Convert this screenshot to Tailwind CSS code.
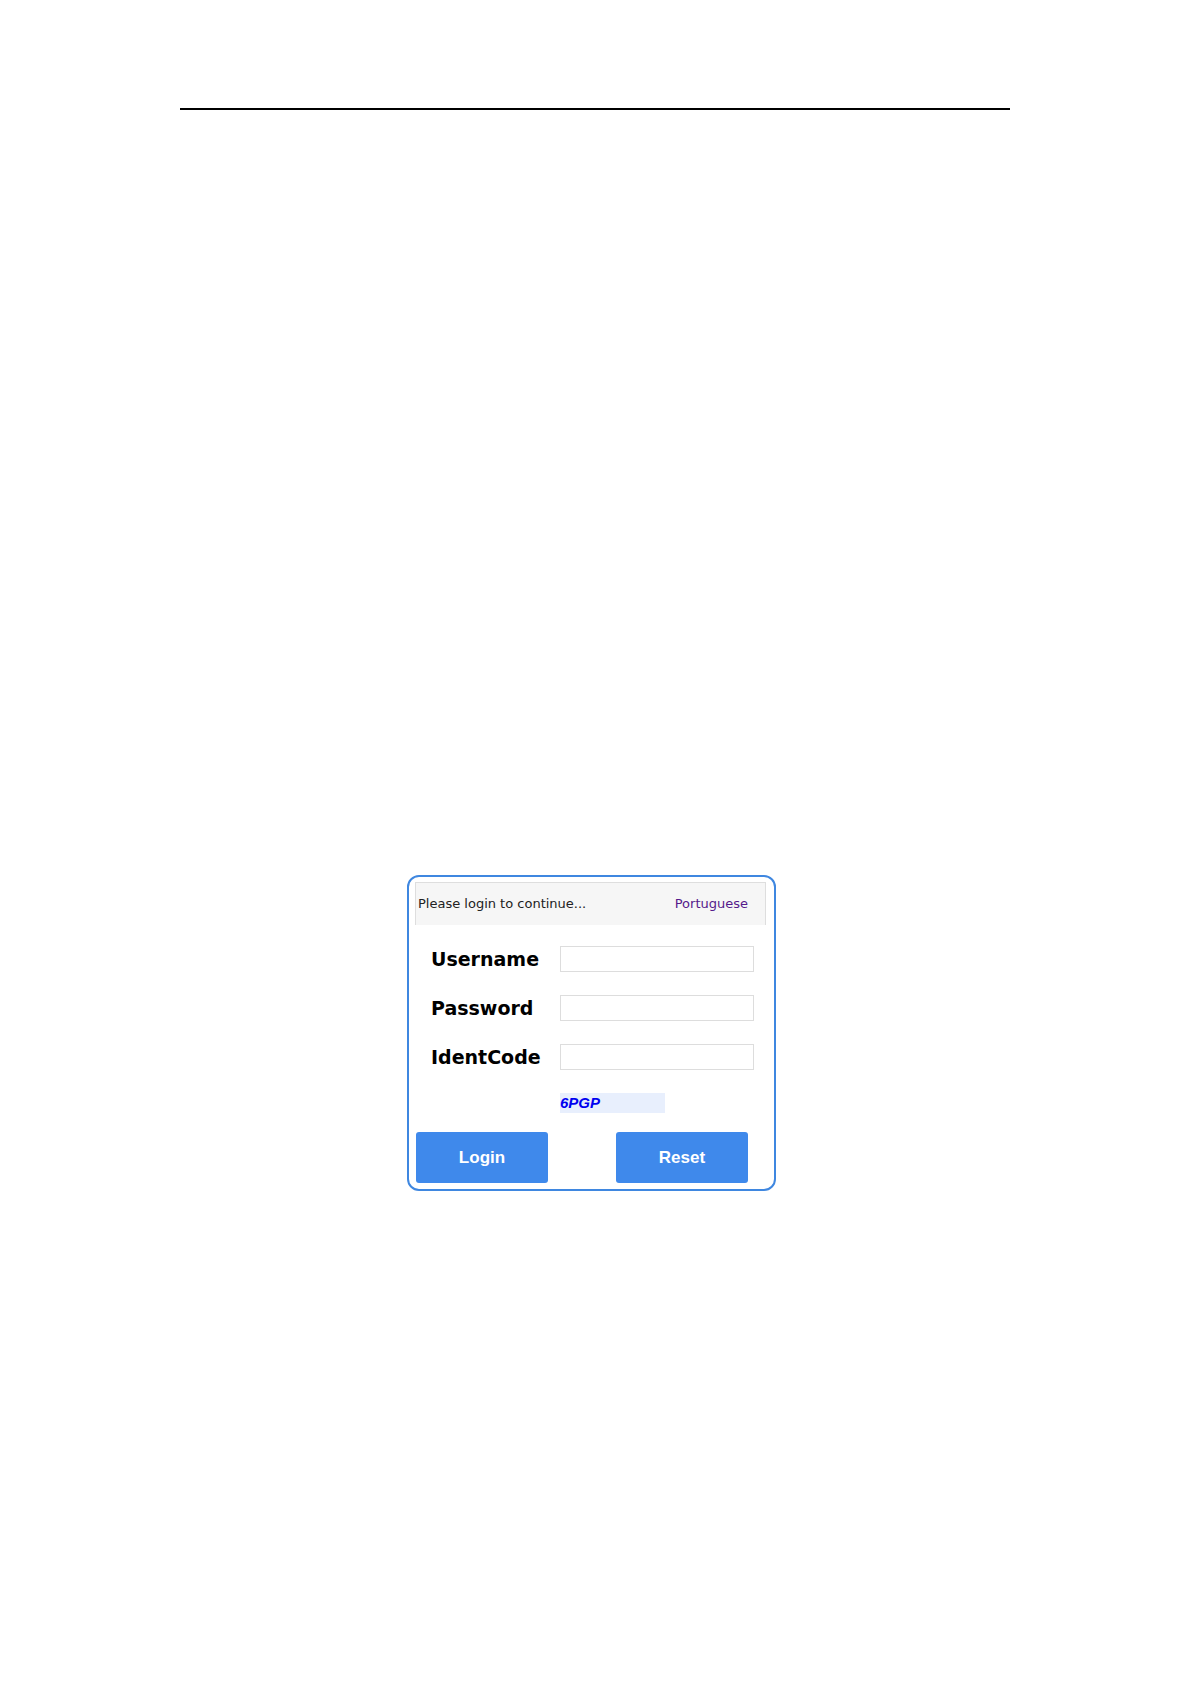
<!DOCTYPE html>
<html lang="en">

<head>
    <meta charset="UTF-8">
    <meta name="viewport" content="width=device-width, initial-scale=1.0">
    <script src="https://cdn.jsdelivr.net/npm/@tailwindcss/browser@4"></script>
    <title>Login</title>
</head>

<body class="bg-white text-black font-['DejaVu_Sans',Verdana,sans-serif]">
    <header class="pt-[108px] pl-[180px] pr-[182px]">
        <hr class="border-0 h-[2px] bg-black">
    </header>

    <main class="flex justify-center pt-[765px] pb-16 pr-[9px]">
        <form class="w-[369px] border-2 border-[#3f87e0] rounded-xl pt-[5px] pb-[6px] pl-[6px] pr-2">
            <!-- Title bar -->
            <div
                class="flex justify-between items-center h-[43px] pl-[2px] pr-[17px] bg-[#f6f6f6] border border-b-0 border-[#dedede] text-[13px]">
                <span class="text-[#222222]">Please login to continue...</span>
                <a href="#" class="text-[#551a8b]">Portuguese</a>
            </div>

            <!-- Fields -->
            <div class="grid grid-cols-[129px_194px] gap-y-[23px] items-center pt-[21px] pl-4">
                <label for="username" class="text-[19px] leading-[26px] font-bold">Username</label>
                <input type="text" id="username" name="username" class="h-[26px] px-1 border border-[#dddddd] text-sm">
                <label for="password" class="text-[19px] leading-[26px] font-bold">Password</label>
                <input type="password" id="password" name="password"
                    class="h-[26px] px-1 border border-[#dddddd] text-sm">
                <label for="identcode" class="text-[19px] leading-[26px] font-bold">IdentCode</label>
                <input type="text" id="identcode" name="identcode" class="h-[26px] px-1 border border-[#dddddd] text-sm">
                <div
                    class="col-start-2 w-[105px] h-5 leading-5 bg-[#e8effd] text-[#0000f0] text-[15px] font-bold italic font-['Liberation_Sans',Arial,sans-serif]">
                    6PGP</div>
            </div>

            <!-- Actions -->
            <div class="flex justify-between pt-[19px] pl-px pr-[18px]">
                <button type="submit"
                    class="w-[132px] h-[51px] rounded-[3px] bg-[#3f89eb] text-white text-[17px] font-bold font-['Liberation_Sans',Arial,sans-serif]">Login</button>
                <button type="reset"
                    class="w-[132px] h-[51px] rounded-[3px] bg-[#3f89eb] text-white text-[17px] font-bold font-['Liberation_Sans',Arial,sans-serif]">Reset</button>
            </div>
        </form>
    </main>
</body>

</html>
